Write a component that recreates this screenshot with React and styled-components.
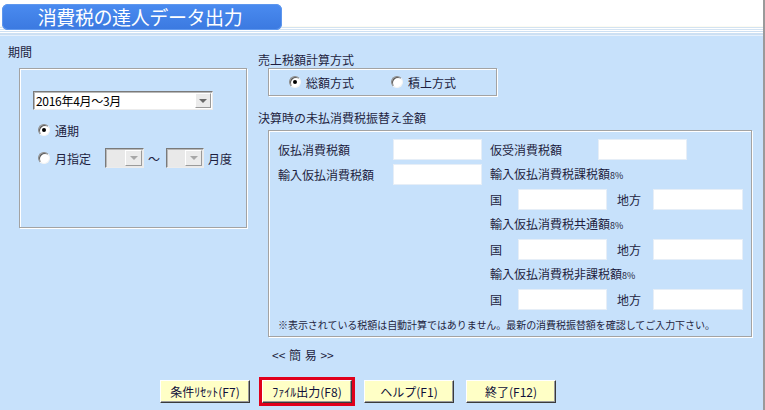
import React from 'react';
import styled, { createGlobalStyle, css } from 'styled-components';

const Global = createGlobalStyle`
  html, body { margin: 0; padding: 0; background: #c7e1fb; }
  body {
    font-family: "Noto Sans CJK JP", "Noto Sans", sans-serif;
    font-size: 12px;
    color: #1e1e40;
  }
  * { box-sizing: border-box; }
`;

const Window = styled.div`
  width: 765px;
  height: 410px;
  display: flex;
  flex-direction: column;
  background: #c7e1fb;
  border-right: 2px solid #9a9a9a;
  overflow: hidden;
`;

const Header = styled.header`
  height: 36px;
  flex: none;
  padding: 4px 0 0 2px;
  background: linear-gradient(
    #ffffff 0 26px,
    #fdfbf1 26px 27px,
    #d3e3f2 27px 28px,
    #ffffff 28px 29px,
    #d3e3f2 29px 30px,
    #ffffff 30px 31px,
    #cde0f3 31px 32px,
    #ffffff 32px 33px,
    #cde0f3 33px 35px,
    #e6f0fb 35px 36px
  );
`;

const TitleBar = styled.div`
  width: 280px;
  height: 26px;
  border-radius: 6px;
  background: linear-gradient(#4a8bf0, #3b79e0);
  box-shadow: inset 0 0 0 1px #5e97ee;
  color: #ffffff;
  font-size: 19px;
  line-height: 26px;
  letter-spacing: -0.4px;
  text-align: center;
  padding-right: 4px;
`;

const Content = styled.main`
  display: flex;
  align-items: flex-start;
  gap: 11px;
  padding-left: 8px;
`;

const Column = styled.section`
  width: ${p => p.$w}px;
  padding-top: ${p => p.$top}px;
  display: flex;
  flex-direction: column;
`;

const SectionLabel = styled.div`
  line-height: 14px;
  height: 14px;
  margin-top: ${p => p.$mt || 0}px;
  white-space: nowrap;
`;

const GroupBox = styled.div`
  border: 1px solid #a3a3a3;
  box-shadow: inset 1px 1px 0 #ffffff, 1px 1px 0 #ffffff;
  margin-left: ${p => p.$ml}px;
  margin-top: ${p => p.$mt}px;
  width: ${p => p.$w}px;
  height: ${p => p.$h}px;
`;

const PeriodBox = styled(GroupBox)`
  padding: 22px 0 0 13px;
  display: flex;
  flex-direction: column;
`;

const MethodBox = styled(GroupBox)`
  display: flex;
  align-items: center;
  padding-left: 20px;
`;

const AmountBox = styled(GroupBox)`
  padding: 8px 0 0 9px;
  display: flex;
  flex-direction: column;
  gap: 4px;
`;

const Combo = styled.div`
  display: flex;
  width: ${p => p.$w}px;
  height: ${p => p.$h}px;
  border: 1px solid;
  border-color: #7a7a7a #ececec #ececec #7a7a7a;
  box-shadow: inset 1px 1px 0 #b8b8b8;
  background: ${p => (p.$disabled ? '#e9e9e9' : '#ffffff')};
  flex: none;
`;

const ComboText = styled.span`
  flex: 1;
  padding-left: 2px;
  line-height: ${p => p.$h - 2}px;
  color: #000;
  font-size: 12px;
  letter-spacing: -0.3px;
  white-space: nowrap;
  overflow: hidden;
`;

const DropButton = styled.span`
  width: ${p => p.$w}px;
  margin: 1px 1px 1px 0;
  display: flex;
  align-items: center;
  justify-content: center;
  background: #ebebeb;
  border: 1px solid;
  border-color: #ffffff #9a9a9a #9a9a9a #ffffff;
  &::before {
    content: '';
    width: 0;
    height: 0;
    border-left: 4px solid transparent;
    border-right: 4px solid transparent;
    border-top: 4px solid ${p => (p.$disabled ? '#a8a8a8' : '#6a6a6a')};
  }
`;

const RadioRow = styled.div`
  display: flex;
  align-items: center;
  height: 20px;
  margin-top: ${p => p.$mt || 0}px;
  margin-left: ${p => p.$ml || 0}px;
  width: ${p => (p.$w ? `${p.$w}px` : 'auto')};
  white-space: nowrap;
`;

const RadioCircle = styled.span`
  position: relative;
  flex: none;
  width: 12px;
  height: 12px;
  border-radius: 50%;
  background: #ffffff;
  border: 1px solid;
  border-color: #8a8a8a #f4f4f4 #f4f4f4 #8a8a8a;
  box-shadow: inset 1px 1px 0 #5a5a5a;
  margin-right: 5px;
  ${p =>
    p.$checked &&
    css`
      &::after {
        content: '';
        position: absolute;
        left: 3px;
        top: 3px;
        width: 4px;
        height: 4px;
        border-radius: 50%;
        background: #000;
      }
    `}
`;

const Tilde = styled.span`
  margin: 0 6px 0 4px;
`;

const Suffix = styled.span`
  margin-left: 4px;
`;

const Row = styled.div`
  display: flex;
  align-items: center;
  height: 21px;
  white-space: nowrap;
`;

const LeftCell = styled.div`
  display: flex;
  align-items: center;
  width: 212px;
  flex: none;
`;

const Cell = styled.span`
  width: ${p => p.$w}px;
  margin-left: ${p => p.$ml || 0}px;
  flex: none;
  line-height: 14px;
`;

const Field = styled.span`
  display: block;
  width: ${p => p.$w}px;
  height: 21px;
  flex: none;
  background: #ffffff;
  border: 1px solid #e6eef7;
`;

const Small = styled.span`
  font-size: 9px;
`;

const Note = styled.div`
  font-size: 10px;
  line-height: 21px;
  height: 21px;
  white-space: nowrap;
  letter-spacing: -0.05px;
`;

const ModeLink = styled.div`
  margin: 11px 0 0 14px;
  line-height: 14px;
  word-spacing: 1px;
`;

const Footer = styled.footer`
  margin-top: auto;
  display: flex;
  gap: 12px;
  padding: 0 0 7px 160px;
`;

const Button = styled.button`
  width: 90px;
  height: 23px;
  padding: 0;
  background: #ffffc6;
  border: 1px solid;
  border-color: #ffffff #3a3a3a #3a3a3a #ffffff;
  box-shadow: inset -1px -1px 0 #9c9c9c;
  font-family: "Noto Sans CJK JP", "Noto Sans", sans-serif;
  font-size: 12px;
  color: #10103a;
  ${p =>
    p.$focused &&
    css`
      outline: 3px solid #e0001b;
    `}
`;

function Radio({ checked, children, ...rest }) {
  return (
    <RadioRow {...rest}>
      <RadioCircle $checked={checked} />
      {children}
    </RadioRow>
  );
}

function ComboBox({ w, h, text, disabled, btn = 16 }) {
  return (
    <Combo $w={w} $h={h} $disabled={disabled}>
      <ComboText $h={h}>{text}</ComboText>
      <DropButton $w={btn} $disabled={disabled} />
    </Combo>
  );
}

function TaxRow({ label }) {
  return (
    <Row>
      <LeftCell />
      <Cell $w={28}>国</Cell>
      <Field $w={89} />
      <Cell $w={36} $ml={10}>地方</Cell>
      <Field $w={90} />
    </Row>
  );
}

export default function App() {
  return (
    <>
      <Global />
      <Window>
        <Header>
          <TitleBar>消費税の達人データ出力</TitleBar>
        </Header>
        <Content>
          <Column $w={239} $top={9}>
            <SectionLabel>期間</SectionLabel>
            <PeriodBox $ml={11} $mt={9} $w={228} $h={160}>
              <ComboBox w={180} h={19} text="2016年4月～3月" />
              <Radio checked $mt={10} $ml={5}>通期</Radio>
              <Radio $mt={8} $ml={5}>
                <span>月指定</span>
                <span style={{ width: 14 }} />
                <ComboBox w={39} h={20} disabled btn={17} />
                <Tilde>～</Tilde>
                <ComboBox w={38} h={20} disabled btn={17} />
                <Suffix>月度</Suffix>
              </Radio>
            </PeriodBox>
          </Column>
          <Column $w={494} $top={17}>
            <SectionLabel>売上税額計算方式</SectionLabel>
            <MethodBox $ml={10} $mt={1} $w={229} $h={28}>
              <Radio checked $w={102}>総額方式</Radio>
              <Radio>積上方式</Radio>
            </MethodBox>
            <SectionLabel $mt={15}>決算時の未払消費税振替え金額</SectionLabel>
            <AmountBox $ml={10} $mt={5} $w={484} $h={207}>
              <Row>
                <LeftCell>
                  <Cell $w={115}>仮払消費税額</Cell>
                  <Field $w={89} />
                </LeftCell>
                <Cell $w={108}>仮受消費税額</Cell>
                <Field $w={89} />
              </Row>
              <Row>
                <LeftCell>
                  <Cell $w={115}>輸入仮払消費税額</Cell>
                  <Field $w={89} />
                </LeftCell>
                <Cell>輸入仮払消費税課税額<Small>8%</Small></Cell>
              </Row>
              <TaxRow />
              <Row>
                <LeftCell />
                <Cell>輸入仮払消費税共通額<Small>8%</Small></Cell>
              </Row>
              <TaxRow />
              <Row>
                <LeftCell />
                <Cell>輸入仮払消費税非課税額<Small>8%</Small></Cell>
              </Row>
              <TaxRow />
              <Note>※表示されている税額は自動計算ではありません。最新の消費税振替額を確認してご入力下さい。</Note>
            </AmountBox>
            <ModeLink>&lt;&lt; 簡 易 &gt;&gt;</ModeLink>
          </Column>
        </Content>
        <Footer>
          <Button>条件ﾘｾｯﾄ(F7)</Button>
          <Button $focused>ﾌｧｲﾙ出力(F8)</Button>
          <Button>ヘルプ(F1)</Button>
          <Button>終了(F12)</Button>
        </Footer>
      </Window>
    </>
  );
}
